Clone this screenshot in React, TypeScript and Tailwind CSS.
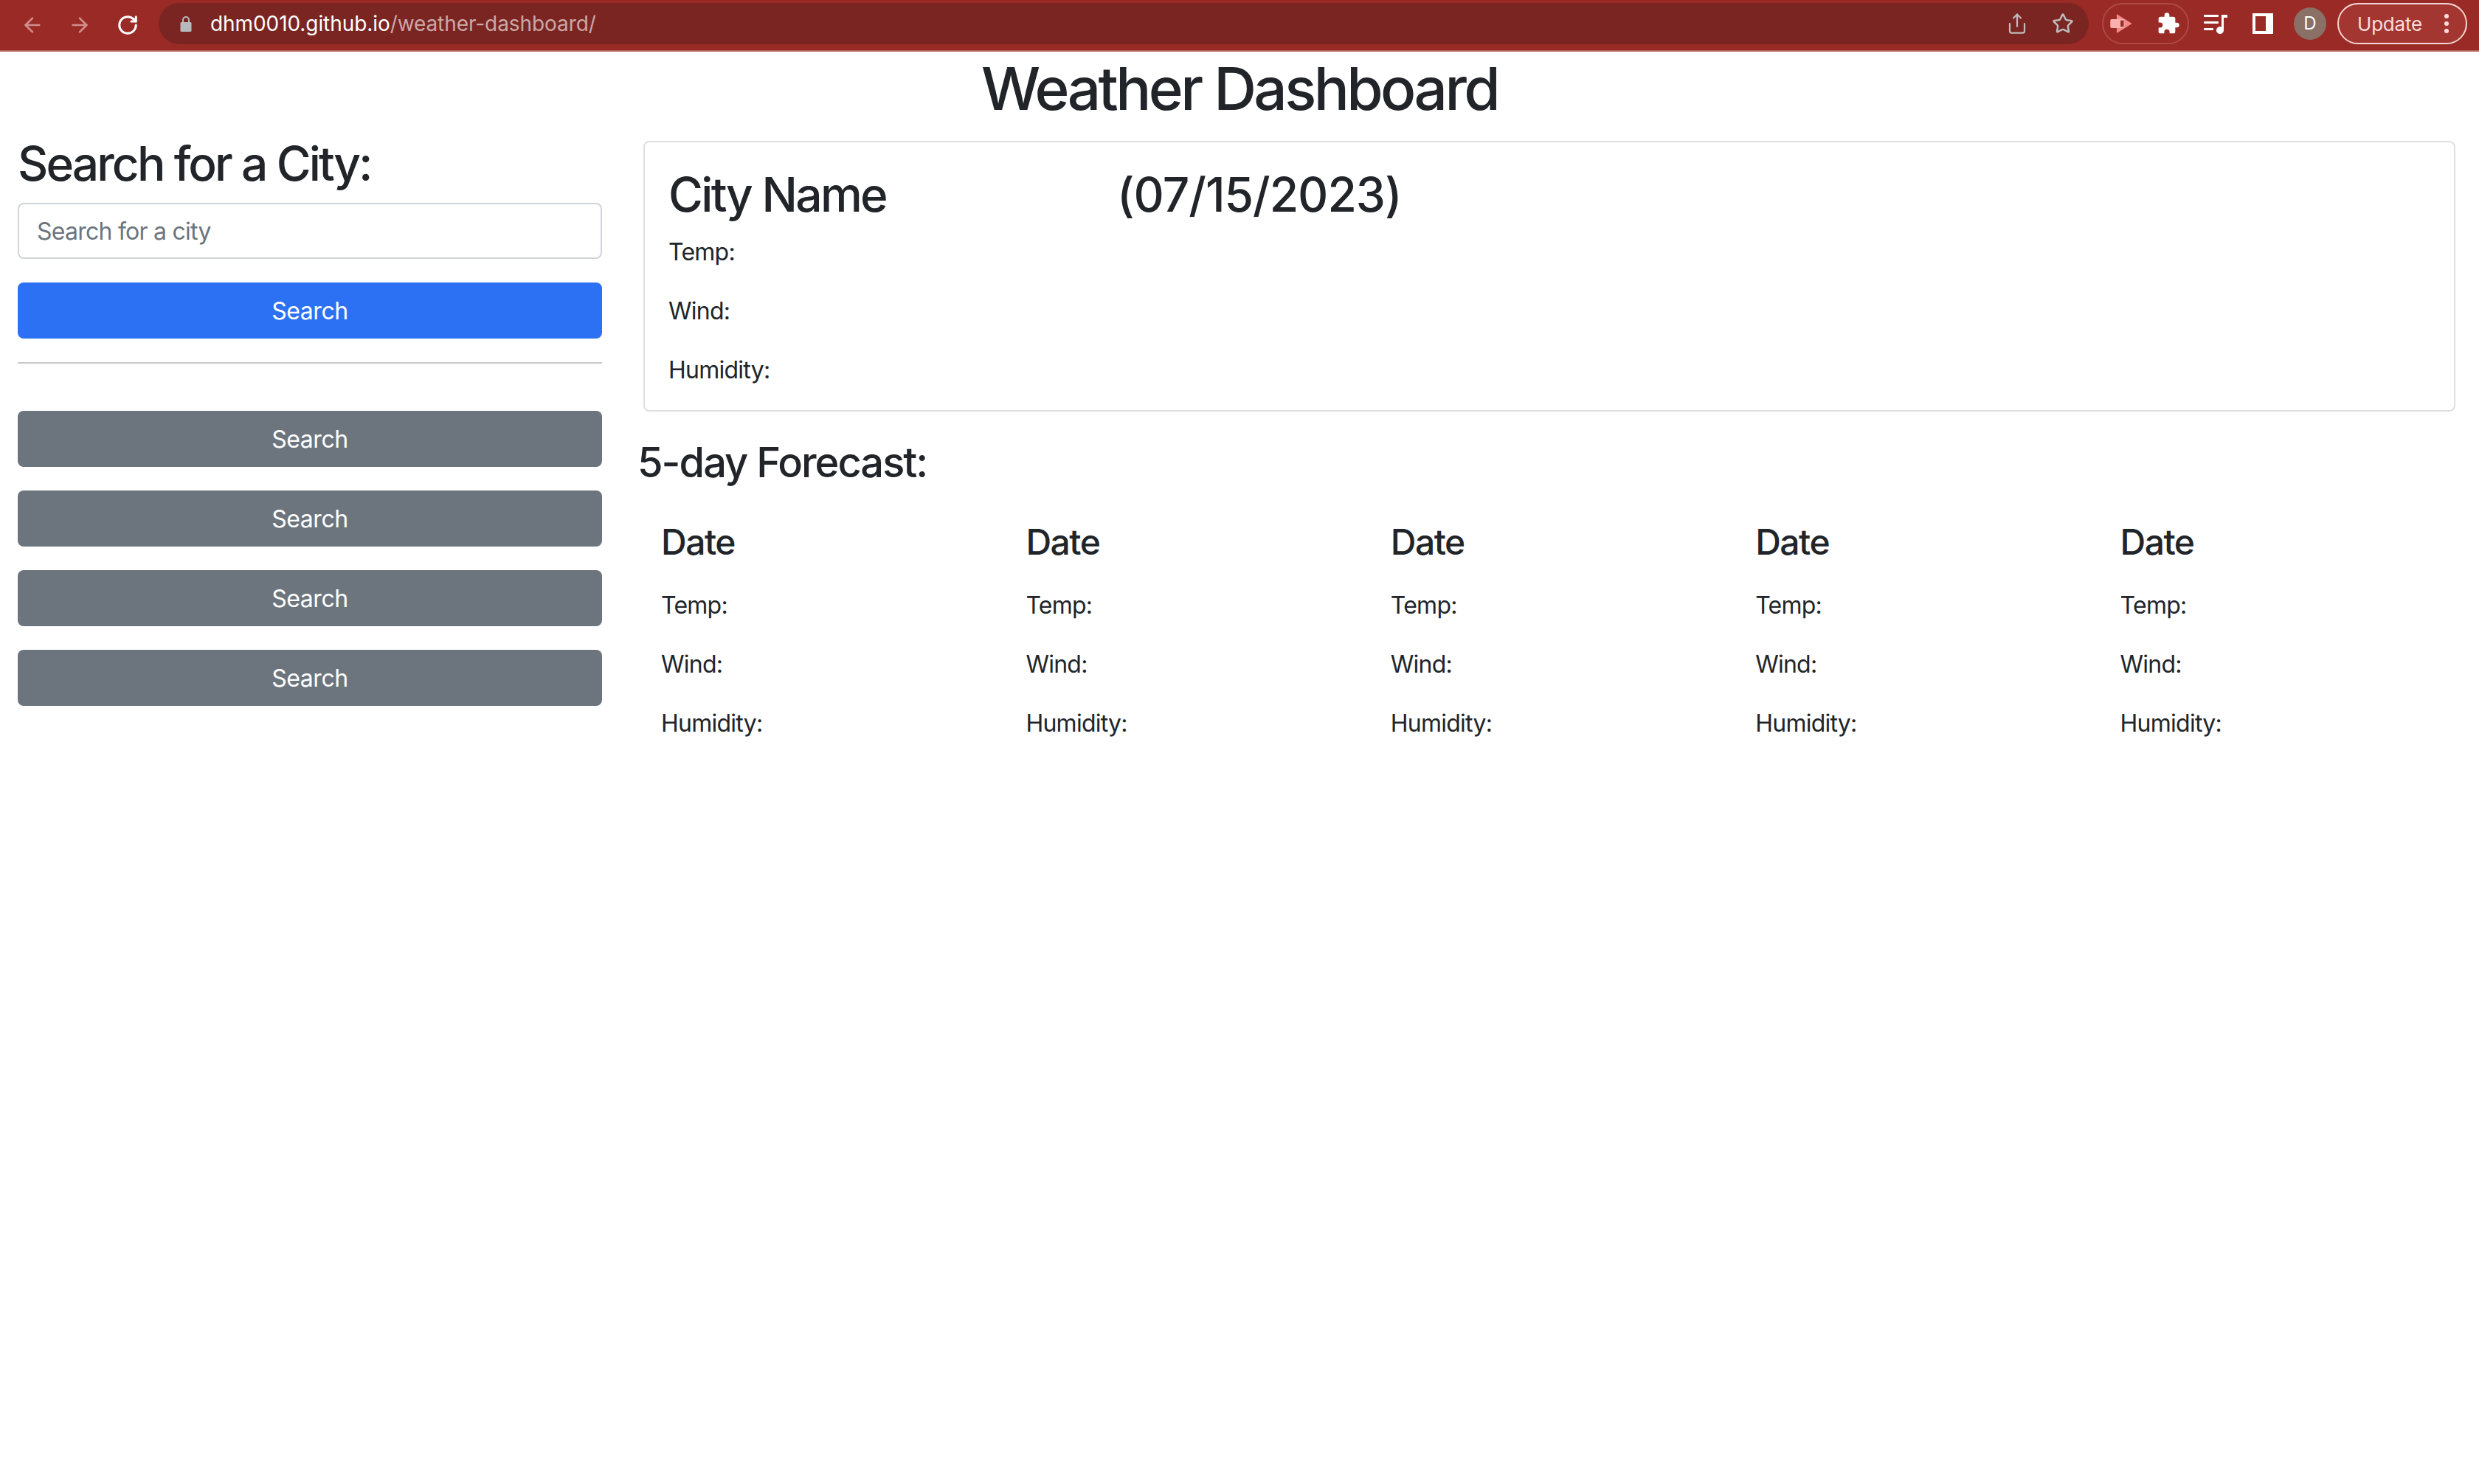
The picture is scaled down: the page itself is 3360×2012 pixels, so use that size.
import React from 'react';
import { ArrowLeft, ArrowRight, RotateCw, Star, Share } from 'lucide-react';

const inter = "font-['Inter','Liberation_Sans',sans-serif]";

const Metrics = ({ className = '' }: { className?: string }) => (
  <div className={className}>
    <p className="mb-[32px] text-[32px] leading-[48px] tracking-[-0.75px]">Temp:</p>
    <p className="mb-[32px] text-[32px] leading-[48px] tracking-[-0.75px]">Wind:</p>
    <p className="mb-[32px] text-[32px] leading-[48px] tracking-[-0.75px]">Humidity:</p>
  </div>
);

const Toolbar = () => (
  <div className="flex h-[70px] items-start border-b-2 border-[#b4605b] bg-[#9a2a25]">
    <div className="flex h-[68px] w-[215px] shrink-0 items-center pl-[28px]">
      <ArrowLeft className="h-[32px] w-[32px] text-[#d08f8b]" strokeWidth={2} />
      <ArrowRight className="ml-[32px] h-[32px] w-[32px] text-[#d08f8b]" strokeWidth={2} />
      <RotateCw className="ml-[34px] h-[30px] w-[30px] text-white" strokeWidth={2.4} />
    </div>
    <div className="mt-[4px] flex h-[56px] w-[2616px] shrink-0 items-center rounded-full bg-[#7a2522]">
      <svg viewBox="0 0 18 22" className="ml-[28px] h-[22px] w-[18px]">
        <path d="M5 9V6a4 4 0 0 1 8 0v3" fill="none" stroke="#b7babd" strokeWidth="2" />
        <rect x="1.5" y="9" width="15" height="13" rx="1.5" fill="#b7babd" />
      </svg>
      <span className="ml-[24px] text-[28px] tracking-[-0.08px] text-white">
        dhm0010.github.io<span className="text-[#caa8a6]">/weather-dashboard/</span>
      </span>
      <Share className="ml-auto h-[30px] w-[30px] text-[#bcbcbc]" strokeWidth={1.8} />
      <Star className="ml-[32px] mr-[20px] h-[30px] w-[30px] text-[#bcbcbc]" strokeWidth={2} />
    </div>
    <div className="ml-[18px] mt-[4px] flex h-[56px] w-[118px] shrink-0 items-center justify-between rounded-full border-2 border-[#ad4a45] pl-[10px] pr-[10px]">
      <svg viewBox="0 0 34 30" className="-ml-[3px] h-[26px] w-[34px]">
        <path d="M10 0 L34 15 L10 30 Z" fill="#f08a88" />
        <rect x="0" y="8" width="22" height="14" rx="2" fill="#f7b2b0" />
        <path d="M16 10 h5 v10 h-5 z" fill="#9a2a25" />
      </svg>
      <svg viewBox="0 0 24 24" className="h-[32px] w-[32px]" fill="#ffffff">
        <path d="M20.5 11H19V7a2 2 0 0 0-2-2h-4V3.5a2.5 2.5 0 0 0-5 0V5H4a2 2 0 0 0-2 2v3.8h1.5a2.7 2.7 0 0 1 0 5.4H2V20a2 2 0 0 0 2 2h3.8v-1.5a2.7 2.7 0 0 1 5.4 0V22H17a2 2 0 0 0 2-2v-4h1.5a2.5 2.5 0 0 0 0-5z" />
      </svg>
    </div>
    <div className="ml-[20px] mt-[18px] w-[32px] shrink-0">
      <svg viewBox="0 0 32 28" className="h-[28px] w-[32px]" fill="#ffffff">
        <rect x="0" y="2" width="20" height="3" rx="1" />
        <rect x="0" y="11" width="20" height="3" rx="1" />
        <rect x="0" y="20" width="13" height="3" rx="1" />
        <path d="M24 2h8v4h-5v17a5 5 0 1 1-3-4.5z" />
      </svg>
    </div>
    <div className="ml-[34px] mt-[18px] flex h-[28px] w-[28px] shrink-0 border-[4px] border-r-[10px] border-white" />
    <div className="ml-[28px] mt-[10px] flex h-[44px] w-[44px] shrink-0 items-center justify-center rounded-full bg-[#8a7066] text-[24px] text-white">
      D
    </div>
    <div className="ml-[15px] mt-[4px] flex h-[56px] w-[176px] shrink-0 items-center rounded-full border-2 border-[#f3d6d3] bg-[#a43632] pl-[25px] text-[26px] tracking-[-0.2px] text-[#f8dfdd]">
      Update
      <span className="ml-[30px] flex flex-col gap-[4px]">
        <span className="h-[6px] w-[6px] rounded-full bg-[#f8dfdd]" />
        <span className="h-[6px] w-[6px] rounded-full bg-[#f8dfdd]" />
        <span className="h-[6px] w-[6px] rounded-full bg-[#f8dfdd]" />
      </span>
    </div>
  </div>
);

const App = () => {
  return (
    <div className={`min-h-screen bg-white text-[#212529] ${inter}`}>
      <Toolbar />
      <h1 className="mb-[23px] mt-[2px] text-center text-[80px] font-medium leading-[96px] tracking-[-3.6px]">Weather Dashboard</h1>
      <div className="flex">
        <aside className="w-[840px] shrink-0 px-[24px]">
          <h2 className="-mt-[8px] mb-[15px] text-[64px] font-medium leading-[77px] tracking-[-2.9px]">Search for a City:</h2>
          <input
            placeholder="Search for a city"
            className="block h-[76px] w-full rounded-[8px] border-2 border-[#ced4da] px-[24px] text-[32px] tracking-[-0.75px] placeholder:text-[#6c757d]"
          />
          <button className="mt-[32px] block h-[76px] w-full rounded-[8px] bg-[#2c71f4] pt-[2px] text-[32px] tracking-[-0.45px] text-white">Search</button>
          <hr className="my-[32px] border-t-2 border-[#c8c9ca]" />
          <div className="flex flex-col gap-[32px] pt-[32px]">
            {[0, 1, 2, 3].map(i => (
              <button key={i} className="h-[76px] w-full rounded-[8px] bg-[#6c757d] pt-[2px] text-[32px] tracking-[-0.45px] text-white">Search</button>
            ))}
          </div>
        </aside>
        <main className="min-w-0 flex-1 pl-[24px] pr-[32px]">
          <section className="ml-[8px] rounded-[8px] border-2 border-[#dfdfdf] px-[32px] pt-[32px]">
            <div className="flex text-[64px] leading-[77px]">
              <span className="w-[608px] font-medium tracking-[-2.7px]">City Name</span>
              <span className="font-medium tracking-[-1px]">(07/15/2023)</span>
            </div>
            <Metrics className="-mb-[2px] mt-[16px]" />
          </section>
          <h3 className="mt-[36px] text-[56px] font-medium leading-[67px] tracking-[-2px]">5-day Forecast:</h3>
          <div className="mt-[45px] flex pl-[32px]">
            {[0, 1, 2, 3, 4].map(i => (
              <div key={i} className="w-[494.4px] shrink-0">
                <h4 className="mb-[33px] text-[48px] font-medium leading-[58px] tracking-[-1.5px]">Date</h4>
                <Metrics />
              </div>
            ))}
          </div>
        </main>
      </div>
    </div>
  );
};

export default App;
